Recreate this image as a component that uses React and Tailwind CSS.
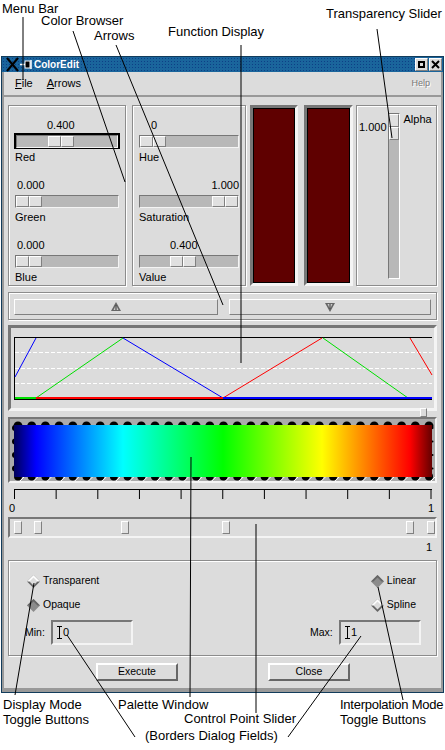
import React from 'react';

const etched = 'border border-[#8c8c8c] shadow-[1px_1px_0_#fff,inset_1px_1px_0_#fff]';
const sunken = 'border-2 border-t-[#777] border-l-[#777] border-b-[#f4f4f4] border-r-[#f4f4f4]';
const raised = 'border border-t-white border-l-white border-b-[#808080] border-r-[#808080]';

// grip used on all the Tk style sliders
const Thumb = ({ className = '' }) => (
  <div className={`flex h-[11px] shrink-0 ${className}`}>
    <div className={`h-full w-[13px] bg-[#e0e0e0] ${raised}`} />
    <div className={`h-full w-[13px] bg-[#e0e0e0] ${raised}`} />
  </div>
);

const ScaleRow = ({ value, label, valueClass, thumbClass, focused }) => (
  <div className="h-[60px]">
    <div className={`h-[15px] text-[11px] leading-[14px] ${valueClass}`}>{value}</div>
    <div className={`-mx-[1px] flex h-[16px] items-center border-solid ${focused ? 'border-2 border-black' : 'border border-transparent'}`}>
      <div className="flex h-[13px] w-full items-center border border-t-[#777] border-l-[#777] border-b-[#f4f4f4] border-r-[#f4f4f4] bg-[#b8b8b8]">
        <Thumb className={thumbClass} />
      </div>
    </div>
    <div className="mt-[1px] text-[11px] leading-[14px]">{label}</div>
  </div>
);

const Swatch = ({ className }) => (
  <div className={`h-full ${className} border-[3px] border-t-[#777] border-l-[#777] border-b-[#f4f4f4] border-r-[#f4f4f4]`}>
    <div className="h-full border border-black bg-[#5f0000]" />
  </div>
);

const ArrowGlyph = ({ down }) => (
  <svg width="10" height="10" viewBox="0 0 10 10" className={down ? 'rotate-180' : ''}>
    <polygon points="5,0 10,9 0,9" fill="#666" />
    <polygon points="5,3 7.5,8 2.5,8" fill="#ccc" />
    <line x1="5" y1="3" x2="5" y2="8" stroke="#333" />
  </svg>
);

const FunctionPlot = () => (
  <svg width="419" height="64" viewBox="14 337 419 64" className="block">
    {[352.5, 368.5, 383.5].map((y) => (
      <line key={y} x1="15" x2="432" y1={y} y2={y} stroke="#fff" strokeDasharray="4 2" />
    ))}
    <line x1="14" x2="432" y1="337.5" y2="337.5" stroke="#000" />
    <line x1="14.5" x2="14.5" y1="337" y2="400" stroke="#000" />
    <line x1="14" x2="432" y1="399.5" y2="399.5" stroke="#000" />
    <polyline points="15,377 36,338" fill="none" stroke="#0000ff" />
    <polyline points="123,338 223,398" fill="none" stroke="#0000ff" />
    <polyline points="36,398 123,338" fill="none" stroke="#00e000" />
    <polyline points="323,338 408,398" fill="none" stroke="#00e000" />
    <polyline points="223,398 322,338" fill="none" stroke="#ff0000" />
    <polyline points="410,338 432,375" fill="none" stroke="#ff0000" />
    <line x1="15" x2="36" y1="398" y2="398" stroke="#00e000" strokeWidth="2" />
    <line x1="36" x2="223" y1="398" y2="398" stroke="#ff0000" strokeWidth="2" />
    <line x1="223" x2="432" y1="398" y2="398" stroke="#0000ff" strokeWidth="2" />
  </svg>
);

const Palette = () => {
  const xs = Array.from({ length: 31 }, (_, i) => 18 + i * 13.7);
  const ys = [428, 441.5, 455, 468.5];
  return (
    <svg width="425" height="62" viewBox="10 419 425 62" className="block">
      <defs>
        <linearGradient id="pal" x1="14" x2="432" y1="0" y2="0" gradientUnits="userSpaceOnUse">
          <stop offset="0" stopColor="#000059" />
          <stop offset="0.0526" stopColor="#0000ff" />
          <stop offset="0.2608" stopColor="#00ffff" />
          <stop offset="0.5" stopColor="#00ff00" />
          <stop offset="0.7368" stopColor="#ffff00" />
          <stop offset="0.9474" stopColor="#ff0000" />
          <stop offset="1" stopColor="#640000" />
        </linearGradient>
      </defs>
      <rect x="10" y="419" width="425" height="62" fill="#ababab" />
      {xs.map((x) => (
        <circle key={x} cx={x} cy="426" r="4.5" fill="#000" />
      ))}
      {xs.map((x) => (
        <g key={x}>
          <circle cx={x} cy="476.5" r="4" fill="#000" />
          <line x1={x + 2} y1="481" x2={x + 6} y2="477" stroke="#fff" />
        </g>
      ))}
      {ys.map((y) => (
        <circle key={y} cx="15" cy={y} r="3" fill="#000" />
      ))}
      {ys.map((y) => (
        <circle key={y} cx="432.5" cy={y} r="1" fill="#000" />
      ))}
      <rect x="14" y="425" width="418" height="52" fill="url(#pal)" />
    </svg>
  );
};

const Ruler = () => (
  <svg width="419" height="11" viewBox="14 489 419 11" className="block">
    <line x1="14" x2="432" y1="489.5" y2="489.5" stroke="#000" />
    {Array.from({ length: 11 }, (_, i) => 14.5 + i * 41.65).map((x) => (
      <line key={x} x1={x} x2={x} y1="489" y2="499" stroke="#000" />
    ))}
  </svg>
);

const Diamond = ({ filled }) => (
  <svg width="13" height="13" viewBox="0 0 13 13" className="shrink-0">
    <polygon points="6.5,0 13,6.5 6.5,13 0,6.5" fill={filled ? '#8c8c8c' : '#666'} />
    <polygon points="6.5,0 13,6.5 6.5,6.5 0,6.5" fill={filled ? '#666' : '#fff'} />
    <polygon points="6.5,2.5 10.5,6.5 6.5,10.5 2.5,6.5" fill={filled ? '#8c8c8c' : '#dcdcdc'} />
  </svg>
);

const Radio = ({ label, filled, className = '' }) => (
  <div className={`flex h-[24px] items-center gap-[3px] text-[10.5px] ${className}`}>
    <Diamond filled={filled} />
    <span>{label}</span>
  </div>
);

const Field = ({ value, className = '' }) => (
  <div className={`flex h-[25px] items-center gap-[1px] bg-[#dcdcdc] pl-[4px] text-[11px] ${sunken} ${className}`}>
    <svg width="5" height="13" viewBox="0 0 5 13">
      <path d="M0 .5h5M0 12.5h5M2.5 0v13" stroke="#000" fill="none" />
    </svg>
    <span>{value}</span>
  </div>
);

const DlgButton = ({ label }) => (
  <div className="flex h-[18px] w-[82px] items-center justify-center border-2 border-t-white border-l-white border-b-[#666] border-r-[#666] text-[10.5px]">
    {label}
  </div>
);

const notes = [
  { text: 'Menu Bar', cls: 'left-[2px] top-[1px]' },
  { text: 'Color Browser', cls: 'left-[41px] top-[13px]' },
  { text: 'Arrows', cls: 'left-[94px] top-[28px]' },
  { text: 'Function Display', cls: 'left-[168px] top-[24px]' },
  { text: 'Transparency Slider', cls: 'left-[326px] top-[6px]' },
  { text: 'Display Mode', cls: 'left-[3px] top-[697px]' },
  { text: 'Toggle Buttons', cls: 'left-[3px] top-[712px]' },
  { text: 'Palette Window', cls: 'left-[118px] top-[697px]' },
  { text: 'Control Point Slider', cls: 'left-[184px] top-[711px]' },
  { text: '(Borders Dialog Fields)', cls: 'left-[145px] top-[728px]' },
  { text: 'Interpolation Mode', cls: 'left-[340px] top-[697px] tracking-[-0.25px]' },
  { text: 'Toggle Buttons', cls: 'left-[340px] top-[712px]' },
];

const leaders = [
  [23, 17, 23, 80],
  [73, 31, 125, 182],
  [116, 45, 223, 305],
  [241, 45, 241, 363],
  [377, 29, 392, 138],
  [191, 457, 190, 697],
  [256, 524, 256, 713],
  [67, 635, 135, 737],
  [361, 636, 288, 737],
  [34, 583, 15, 695],
  [378, 587, 403, 700],
];

const cpThumbs = ['ml-0', 'ml-[12px]', 'ml-[79px]', 'ml-[93px]', 'ml-[176px]', 'ml-[12.5px]'];

export default function App() {
  return (
    <div className="relative h-[750px] w-[445px] overflow-hidden bg-white pt-[56px] font-['Liberation_Sans',Arial,sans-serif] text-black">
      {/* the window itself */}
      <div className="mx-[1px] h-[637px] w-[443px] border border-[#123c5c] bg-[#dcdcdc] shadow-[inset_2px_0_0_#999,inset_-2px_0_0_#999,inset_0_-4px_0_#999]">
        <div className="flex h-[15px] items-center bg-[#1a659c] bg-[radial-gradient(#0d3f86_1px,transparent_1px)] bg-[length:3px_3px]">
          <svg width="34" height="15" viewBox="0 0 34 15" className="ml-[1px] shrink-0">
            <path d="M4 1l11 13M15 1L4 14" stroke="#000" strokeWidth="2" fill="none" />
            <path d="M17 7.5h5M28 3v9" stroke="#fff" strokeWidth="1.5" fill="none" />
            <rect x="22" y="4" width="5" height="7" fill="#000" stroke="#fff" />
          </svg>
          <span className="ml-[-3px] text-[10px] font-bold text-white">ColorEdit</span>
          <div className="ml-auto mr-[1px] flex gap-[1px]">
            <div className={`flex h-[13px] w-[13px] items-center justify-center bg-[#dcdcdc] ${raised}`}>
              <div className="h-[7px] w-[7px] border-2 border-black" />
            </div>
            <div className={`flex h-[13px] w-[13px] items-center justify-center bg-[#dcdcdc] ${raised}`}>
              <svg width="9" height="9" viewBox="0 0 9 9">
                <path d="M1 1l7 7M8 1L1 8" stroke="#000" strokeWidth="2" />
              </svg>
            </div>
          </div>
        </div>

        <div className="flex h-[25px] items-center gap-[14px] border-b-2 border-[#999] pl-[13px] pr-[13px] text-[11px]">
          <span><u>F</u>ile</span>
          <span><u>A</u>rrows</span>
          <span className="ml-auto text-[9px] text-[#777] [text-shadow:1px_1px_0_#fff]">Help</span>
        </div>

        <div className="px-[6px] pt-[8px]">
          <div className="flex h-[181px]">
            <div className={`w-[118px] px-[6px] pt-[12px] ${etched}`}>
              <ScaleRow value="0.400" label="Red" valueClass="pl-[32px]" thumbClass="ml-[31px]" focused />
              <ScaleRow value="0.000" label="Green" valueClass="pl-[2px]" thumbClass="ml-0" />
              <ScaleRow value="0.000" label="Blue" valueClass="pl-[2px]" thumbClass="ml-0" />
            </div>
            <div className={`ml-[6px] w-[114px] px-[6px] pt-[12px] ${etched}`}>
              <ScaleRow value="0" label="Hue" valueClass="pl-[12px]" thumbClass="ml-0" />
              <ScaleRow value="1.000" label="Saturation" valueClass="text-right" thumbClass="ml-auto" />
              <ScaleRow value="0.400" label="Value" valueClass="pl-[31px]" thumbClass="ml-[30px]" />
            </div>
            <Swatch className="ml-[4px] w-[48px]" />
            <Swatch className="ml-[6px] w-[49px]" />
            <div className={`ml-[3px] flex w-[81px] pl-[2px] pt-[7px] ${etched}`}>
              <span className="mt-[7px] text-[11px] leading-[14px]">1.000</span>
              <div className="ml-[1px] h-[166px] w-[12px] border border-t-[#777] border-l-[#777] border-b-white border-r-white bg-[#b8b8b8]">
                <div className={`h-[13px] bg-[#e0e0e0] ${raised}`} />
                <div className={`h-[13px] bg-[#e0e0e0] ${raised}`} />
              </div>
              <span className="ml-[4px] text-[11px] leading-[12px]">Alpha</span>
            </div>
          </div>

          <div className={`mt-[6px] flex h-[28px] gap-[11px] px-[5px] pt-[6px] ${etched}`}>
            <div className={`flex h-[16px] w-[204px] items-center justify-center ${raised}`}>
              <ArrowGlyph />
            </div>
            <div className={`flex h-[16px] w-[202px] items-center justify-center ${raised}`}>
              <ArrowGlyph down />
            </div>
          </div>

          <div className="mt-[5px] h-[86px] border-[3px] border-t-[#777] border-l-[#777] border-b-[#f4f4f4] border-r-[#f4f4f4] pl-[3px] pt-[9px]">
            <FunctionPlot />
          </div>

          <div className="relative h-[6px]">
            <div className={`absolute left-[412px] top-[-3px] h-[9px] w-[7px] bg-[#dcdcdc] ${raised}`} />
          </div>

          <div className={`h-[66px] ${sunken}`}>
            <Palette />
          </div>

          <div className="mt-[6px] pl-[6px]">
            <Ruler />
          </div>
          <div className="flex h-[15px] items-center justify-between pl-[1px] pr-[3px] pt-[1px] text-[11px] leading-none">
            <span>0</span>
            <span>1</span>
          </div>

          <div className={`mt-[2px] flex h-[21px] items-center pl-[4px] ${sunken}`}>
            {cpThumbs.map((ml) => (
              <div key={ml} className={`h-[13px] w-[8px] shrink-0 bg-[#e0e0e0] ${raised} ${ml}`} />
            ))}
          </div>
          <div className="flex h-[22px] justify-end pr-[5px] pt-[2px] text-[11px] leading-[14px]">1</div>

          <div className={`relative h-[96px] ${etched}`}>
            <div className="flex justify-between pl-[18px] pr-[20px] pt-[8px]">
              <div>
                <Radio label="Transparent" />
                <Radio label="Opaque" filled />
              </div>
              <div>
                <Radio label="Linear" filled />
                <Radio label="Spline" />
              </div>
            </div>
            <div className="mt-[3px] flex items-center pl-[16px] pr-[15px] text-[10.5px]">
              <span className="w-[26px]">Min:</span>
              <Field value="0" className="w-[82px]" />
              <span className="ml-auto w-[29px]">Max:</span>
              <Field value="1" className="w-[82px]" />
            </div>
          </div>

          <div className="mt-[7px] flex justify-between pl-[88px] pr-[87px]">
            <DlgButton label="Execute" />
            <DlgButton label="Close" />
          </div>
        </div>
      </div>

      {/* call-outs drawn over the screenshot */}
      <svg width="445" height="750" className="pointer-events-none absolute left-0 top-0">
        {leaders.map(([x1, y1, x2, y2]) => (
          <line key={`${x1}-${y1}`} x1={x1} y1={y1} x2={x2} y2={y2} stroke="#000" strokeWidth="1" />
        ))}
      </svg>
      {notes.map((n) => (
        <span key={n.text + n.cls} className={`absolute whitespace-nowrap text-[13px] leading-[16px] ${n.cls}`}>
          {n.text}
        </span>
      ))}
    </div>
  );
}
